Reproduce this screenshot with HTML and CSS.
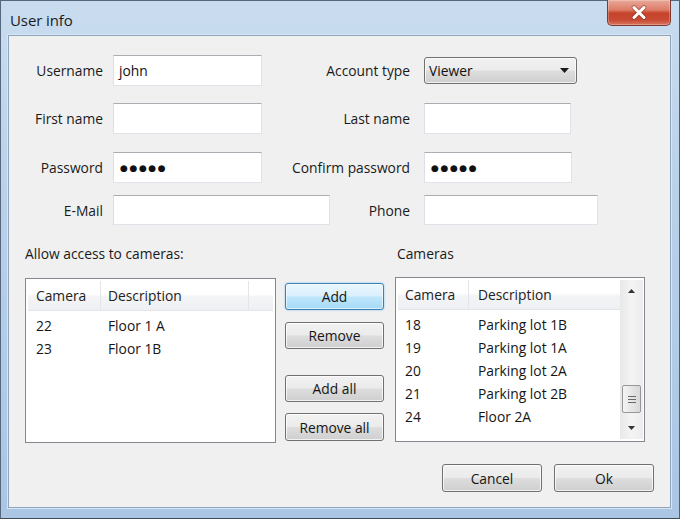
FILE: index.html
```html
<!DOCTYPE html>
<html>
<head>
<meta charset="utf-8">
<link rel="stylesheet" href="styles.css">
</head>
<body>
<div class="window">
  <div class="titlebar">
    <span class="title">User info</span>
    <div class="close">
      <svg width="16" height="15" viewBox="0 0 16 15">
        <path d="M3 2.5 L13 12.5 M13 2.5 L3 12.5" stroke="#7a2a1e" stroke-width="4.6" stroke-linecap="round" opacity="0.45"/>
        <path d="M3 2.5 L13 12.5 M13 2.5 L3 12.5" stroke="#ffffff" stroke-width="3" stroke-linecap="round"/>
      </svg>
    </div>
  </div>
  <div class="content">
    <div class="form">
      <div class="row">
        <span class="lbl">Username</span>
        <div class="cell"><div class="input w149">john</div></div>
        <span class="lbl lbl2">Account type</span>
        <div class="cell">
          <div class="select">
            <span>Viewer</span>
            <svg width="9" height="5" viewBox="0 0 9 5"><path d="M0 0 H9 L4.5 5 Z" fill="#1a1a1a"/></svg>
          </div>
        </div>
      </div>
      <div class="row">
        <span class="lbl">First name</span>
        <div class="cell"><div class="input w149"></div></div>
        <span class="lbl lbl2">Last name</span>
        <div class="cell"><div class="input w147"></div></div>
      </div>
      <div class="row row-pw">
        <span class="lbl">Password</span>
        <div class="cell"><div class="input w149 pwd">●●●●●</div></div>
        <span class="lbl lbl2">Confirm password</span>
        <div class="cell"><div class="input w148 pwd">●●●●●</div></div>
      </div>
      <div class="row row-last">
        <span class="lbl">E-Mail</span>
        <div class="cell"><div class="input w217"></div></div>
        <span class="lbl lbl2">Phone</span>
        <div class="cell"><div class="input w174"></div></div>
      </div>
    </div>

    <div class="lower">
      <div class="col-left">
        <div class="caption">Allow access to cameras:</div>
        <div class="list list-left">
          <div class="lhead">
            <div class="hc c-cam-l">Camera</div>
            <div class="hc c-desc-l">Description</div>
            <div class="hc c-blank"></div>
          </div>
          <div class="lrow"><span class="c-cam-l">22</span><span class="c-desc-l">Floor 1 A</span></div>
          <div class="lrow"><span class="c-cam-l">23</span><span class="c-desc-l">Floor 1B</span></div>
        </div>
      </div>

      <div class="btns">
        <div class="btn focus">Add</div>
        <div class="btn">Remove</div>
        <div class="btn gap-top">Add all</div>
        <div class="btn tall">Remove all</div>
      </div>

      <div class="col-right">
        <div class="caption cap-right">Cameras</div>
        <div class="list list-right">
          <div class="list-body">
            <div class="lhead">
              <div class="hc c-cam-r">Camera</div>
              <div class="hc c-desc-r">Description</div>
            </div>
            <div class="lrow"><span class="c-cam-r">18</span><span class="c-desc-r">Parking lot 1B</span></div>
            <div class="lrow"><span class="c-cam-r">19</span><span class="c-desc-r">Parking lot 1A</span></div>
            <div class="lrow"><span class="c-cam-r">20</span><span class="c-desc-r">Parking lot 2A</span></div>
            <div class="lrow"><span class="c-cam-r">21</span><span class="c-desc-r">Parking lot 2B</span></div>
            <div class="lrow"><span class="c-cam-r">24</span><span class="c-desc-r">Floor 2A</span></div>
          </div>
          <div class="scrollbar">
            <div class="arrow"><svg width="7" height="4" viewBox="0 0 7 4"><path d="M0 4 L3.5 0 L7 4 Z" fill="#333"/></svg></div>
            <div class="track">
              <div class="thumb">
                <svg width="8" height="9" viewBox="0 0 8 9"><path d="M0 1.5 H8 M0 4.5 H8 M0 7.5 H8" stroke="#6a6a6a" stroke-width="1"/></svg>
              </div>
            </div>
            <div class="arrow"><svg width="7" height="4" viewBox="0 0 7 4"><path d="M0 0 L3.5 4 L7 0 Z" fill="#333"/></svg></div>
          </div>
        </div>
      </div>
    </div>

    <div class="footer">
      <div class="btn fbtn">Cancel</div>
      <div class="btn fbtn">Ok</div>
    </div>
  </div>
</div>
</body>
</html>
```

FILE: styles.css
```css
* { box-sizing: border-box; }

html, body {
  margin: 0;
  padding: 0;
  width: 680px;
  height: 519px;
  overflow: hidden;
  background: #ffffff;
}

body {
  font-family: "Open Sans", "Noto Sans", "DejaVu Sans", sans-serif;
  font-size: 13.8px;
  color: #111111;
}

.window {
  width: 680px;
  height: 519px;
  display: flex;
  flex-direction: column;
  border: 1px solid #55677c;
  border-right-color: #5a5f66;
  border-bottom-color: #3f4a57;
  background: linear-gradient(180deg, #c9dcef 0%, #b9d0e9 40%, #aac6e4 100%);
  padding: 0 8px 10px 7px;
}

.titlebar {
  height: 34px;
  display: flex;
  justify-content: space-between;
  align-items: flex-start;
  flex: none;
}

.title {
  font-size: 15px;
  color: #1b1b1b;
  margin-top: 9px;
  margin-left: 2px;
  letter-spacing: -0.1px;
}

.close {
  width: 64px;
  height: 26px;
  margin-top: -1px;
  border: 1px solid #7d3a30;
  border-top: none;
  border-radius: 0 0 5px 5px;
  background: linear-gradient(180deg, #e9a99a 0%, #dc7c66 40%, #c7432b 52%, #c84a33 80%, #d8775f 100%);
  display: flex;
  align-items: center;
  justify-content: center;
  box-shadow: inset 0 0 0 1px rgba(255,255,255,0.25);
}

.content {
  flex: 1;
  background: #f0f0f0;
  border: 1px solid #8fa4bd;
  box-shadow: 0 0 0 1px #d8e6f4;
  display: flex;
  flex-direction: column;
  padding: 19px 0 0 0;
}

/* form */
.form {
  display: flex;
  flex-direction: column;
  gap: 17px;
}

.row {
  display: flex;
  align-items: center;
  height: 31px;
}

.row-pw { margin-top: 1px; }
.row-last { margin-top: -5px; height: 30px; }

.lbl {
  width: 94px;
  text-align: right;
  flex: none;
  color: #1a1a1a;
}

.lbl2 {
  width: 137px;
}

.cell {
  flex: none;
  width: 160px;
  margin-left: 10px;
  display: flex;
  align-items: center;
  height: 100%;
}

.cell:last-child { width: auto; margin-left: 14px; }

.input {
  height: 31px;
  background: #ffffff;
  border: 1px solid #e2e3ea;
  border-top-color: #abadb3;
  border-left-color: #dbdfe6;
  padding: 0 5px;
  display: flex;
  align-items: center;
  flex: none;
  color: #111;
}

.row-last .input { height: 30px; }

.w147 { width: 147px; }
.w148 { width: 148px; }
.w149 { width: 149px; }
.w174 { width: 174px; }
.w217 { width: 217px; }

.pwd {
  font-family: "DejaVu Sans", sans-serif;
  font-size: 9px;
  letter-spacing: 1.6px;
  padding-left: 6px;
}

.select {
  width: 153px;
  height: 27px;
  border: 1px solid #707070;
  border-radius: 3px;
  background: linear-gradient(180deg, #f2f2f2 0%, #ebebeb 48%, #dddddd 52%, #cfcfcf 100%);
  box-shadow: inset 0 0 0 1px rgba(255,255,255,0.7);
  display: flex;
  align-items: center;
  justify-content: space-between;
  padding: 0 7px 0 4px;
  color: #111;
}

/* lower */
.lower {
  display: flex;
  margin-top: 20px;
  padding-left: 16px;
}

.caption {
  height: 18px;
  line-height: 18px;
  margin-bottom: 15px;
  color: #1a1a1a;
}

.cap-right {
  padding-left: 2px;
  margin-bottom: 14px;
}

.list {
  background: #ffffff;
  border: 1px solid #828790;
  padding: 2px;
}

.list-left {
  width: 251px;
  height: 165px;
}

.list-left .lrow { margin-top: 1px; }

.list-right {
  width: 250px;
  height: 165px;
  display: flex;
  padding-right: 1px;
}

.list-body { flex: 1; }

.lhead {
  height: 30px;
  display: flex;
  align-items: center;
  background: linear-gradient(180deg, #ffffff 0%, #ffffff 45%, #f3f4f6 55%, #eef0f3 100%);
  border-bottom: 1px solid #e3e5e8;
  margin-bottom: 3px;
}

.hc {
  height: 100%;
  display: flex;
  align-items: center;
  border-right: 1px solid #e4e5e8;
  color: #222;
}

.lrow {
  height: 23px;
  display: flex;
  align-items: center;
  color: #151515;
}

.list-left .lrow + .lrow { margin-top: 0; }

.c-cam-l { width: 73px; padding-left: 8px; flex: none; }
.c-desc-l { width: 148px; padding-left: 7px; flex: none; }
.c-blank { width: 24px; border-right: none; }

.c-cam-r { width: 71px; padding-left: 7px; flex: none; }
.c-desc-r { width: 150px; padding-left: 9px; flex: none; border-right: none; }

.scrollbar {
  width: 23px;
  flex: none;
  display: flex;
  flex-direction: column;
  background: linear-gradient(90deg, #e8e8e8 0%, #f4f4f4 50%, #ececec 100%);
}

.arrow {
  height: 22px;
  display: flex;
  align-items: center;
  justify-content: center;
}

.track {
  flex: 1;
  display: flex;
  flex-direction: column;
  justify-content: flex-end;
  align-items: center;
  padding-bottom: 4px;
}

.thumb {
  width: 19px;
  height: 28px;
  border: 1px solid #979797;
  border-radius: 2px;
  background: linear-gradient(90deg, #f4f4f4 0%, #e6e6e6 50%, #d8d8d8 100%);
  display: flex;
  align-items: center;
  justify-content: center;
}

/* buttons */
.btns {
  display: flex;
  flex-direction: column;
  margin-left: 9px;
  margin-right: 11px;
  padding-top: 38px;
  gap: 12px;
}

.btn {
  width: 99px;
  height: 27px;
  border: 1px solid #707070;
  border-radius: 3px;
  background: linear-gradient(180deg, #f2f2f2 0%, #ebebeb 48%, #dddddd 52%, #cfcfcf 100%);
  box-shadow: inset 0 0 0 1px rgba(255,255,255,0.75);
  display: flex;
  align-items: center;
  justify-content: center;
  color: #161616;
}

.btn.focus {
  border-color: #3c7fb1;
  background: linear-gradient(180deg, #eaf6fd 0%, #d9f0fc 48%, #bee6fd 52%, #a7d9f5 100%);
  box-shadow: inset 0 0 0 1px rgba(255,255,255,0.6), 0 0 2px #6fc3ee;
}

.btn.gap-top { margin-top: 14px; }
.btn.tall { height: 28px; margin-top: -1px; }

.footer {
  display: flex;
  justify-content: flex-end;
  gap: 12px;
  margin-top: 21px;
  padding-right: 16px;
}

.fbtn {
  width: 100px;
  height: 28px;
}
```
